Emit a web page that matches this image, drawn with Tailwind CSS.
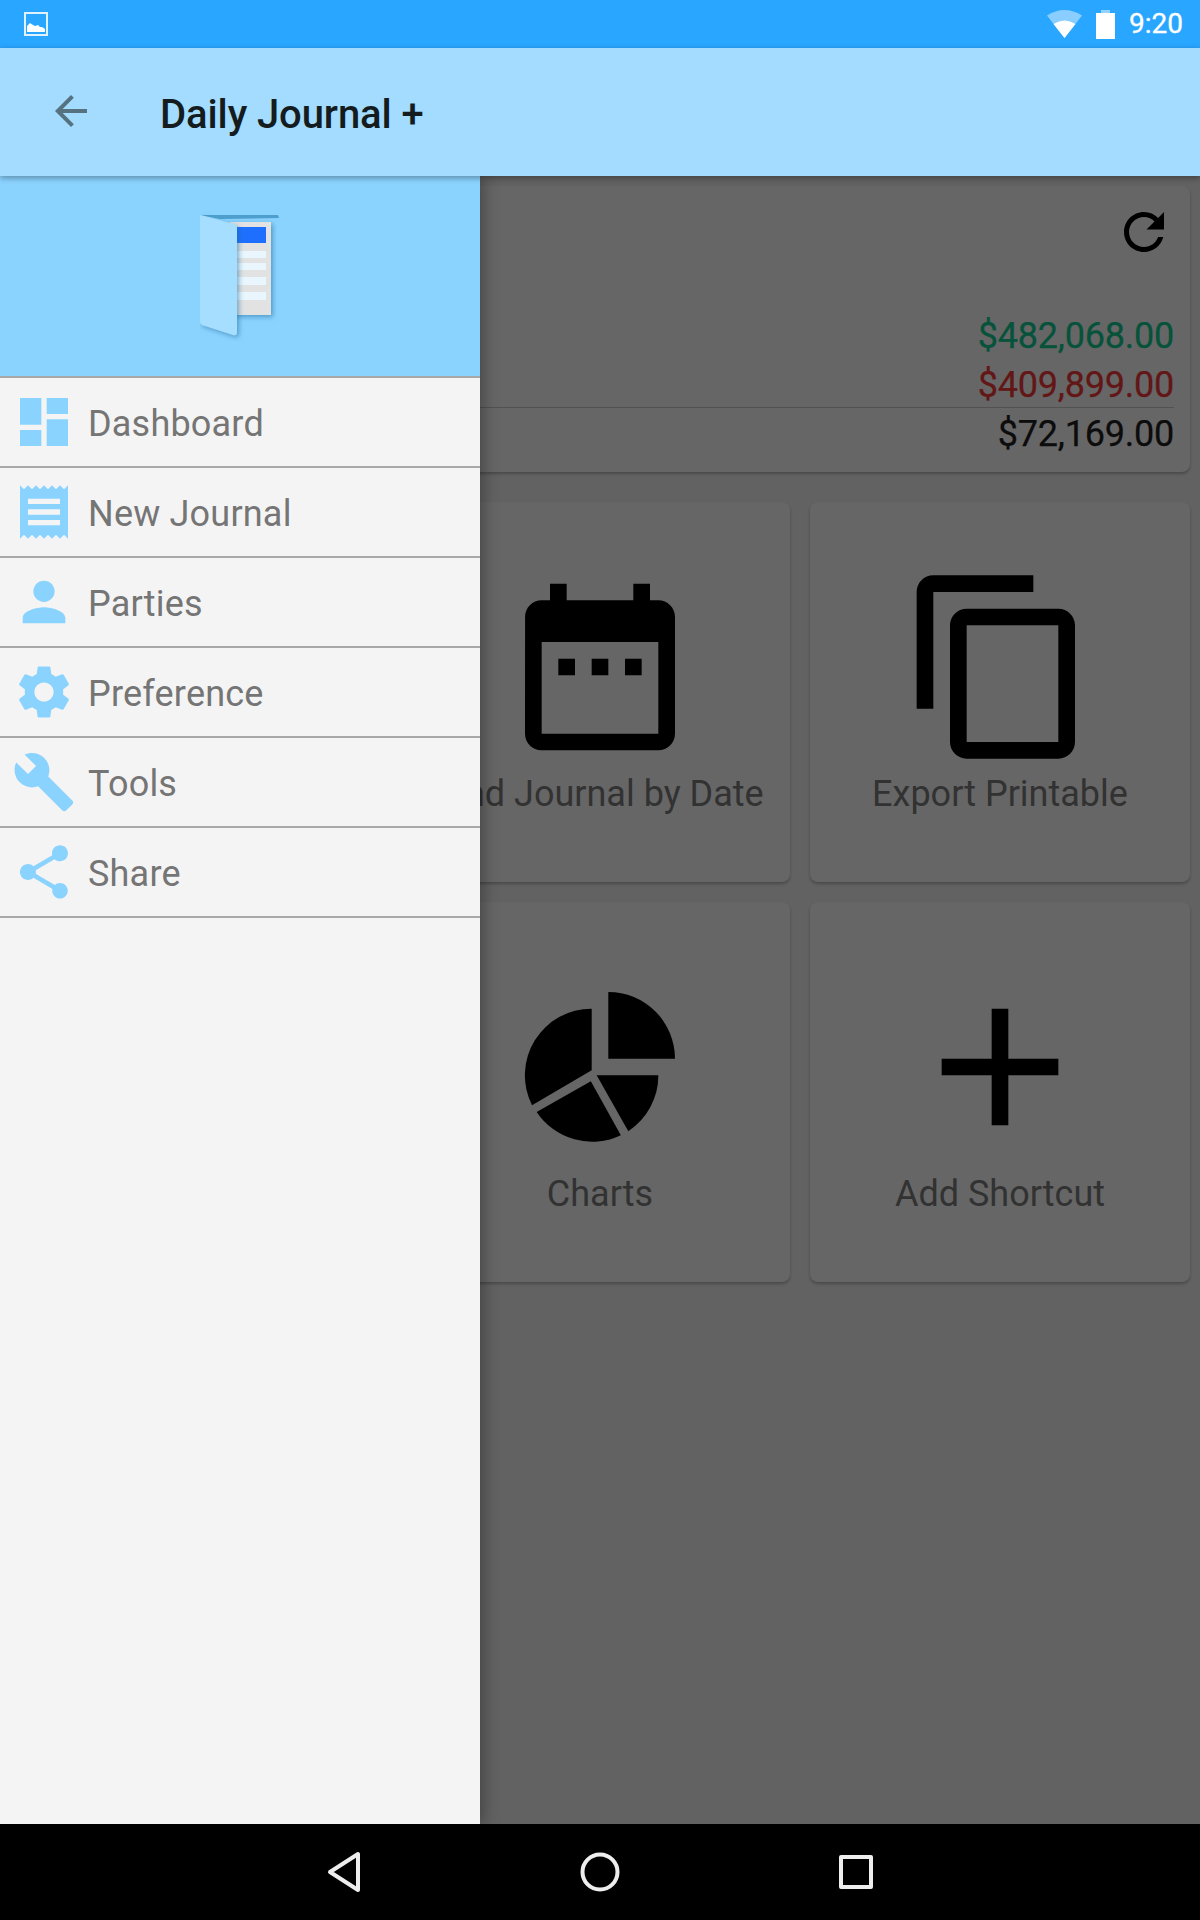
<!DOCTYPE html>
<html lang="en">
  <head>
    <meta charset="UTF-8" />
    <meta name="viewport" content="width=device-width, initial-scale=1.0" />
    <title>Daily Journal +</title>
    <script src="https://cdn.jsdelivr.net/npm/@tailwindcss/browser@4"></script>
  </head>
  <body class="font-['Roboto',sans-serif]">
    <div class="w-[1200px] h-[1920px] flex flex-col overflow-hidden bg-[#626262]">

      <!-- status bar -->
      <div class="h-12 shrink-0 bg-[#29a6ff] flex items-center pl-6 pr-[17px] text-white">
        <div class="w-6 h-6 border-2 border-white/85 flex items-end">
          <svg class="w-5 h-5" viewBox="0 0 20 20" fill="#fff"><path d="M1 18v-6l3-3 3 2 2 1 3-1 2 2 2 0 3 2v3z"/></svg>
        </div>
        <svg class="ml-auto w-[35px] h-7" viewBox="0 0 35 28">
          <path fill="#fff" fill-opacity=".45" d="M0 5.5Q17.5-5.5 35 5.5L17.5 28z"/>
          <path fill="#fff" d="M6.5 14Q17.5 7 28.5 14L17.5 28z"/>
        </svg>
        <svg class="ml-[14px] w-[19px] h-[29px]" viewBox="0 0 19 29">
          <path fill="#fff" fill-opacity=".5" d="M5 0h9v3H5z"/>
          <path fill="#fff" d="M0 3h19v26H0z"/>
        </svg>
        <span class="ml-[14px] text-[28px] leading-none [-webkit-text-stroke:0.3px_#fff]">9:20</span>
      </div>

      <!-- app bar -->
      <div class="relative z-20 h-32 shrink-0 bg-[#a3dcff] flex items-center pl-[47px] shadow-[0_2px_6px_rgba(0,0,0,0.35)]">
        <svg class="w-12 h-12 -mt-0.5" viewBox="0 0 24 24" fill="#56717f"><path d="M20 11H7.83l5.59-5.59L12 4l-8 8 8 8 1.41-1.41L7.83 13H20v-2z"/></svg>
        <h1 class="ml-[65px] mt-[6px] text-[40px] font-medium leading-none tracking-[-0.1px] text-[#141c20]">Daily Journal +</h1>
      </div>

      <!-- main -->
      <div class="relative flex-1 px-2.5 pt-2.5">
        <div class="h-[286px] rounded-lg bg-[#666666] shadow-[0_2px_3px_rgba(0,0,0,0.25)] flex flex-col items-end pt-4 pr-4">
          <svg class="w-[60px] h-[60px]" viewBox="0 0 24 24" fill="#000"><path d="M17.65 6.35C16.2 4.9 14.21 4 12 4c-4.42 0-7.99 3.58-7.99 8s3.57 8 7.99 8c3.73 0 6.84-2.55 7.73-6h-2.08c-.82 2.33-3.04 4-5.65 4-3.31 0-6-2.69-6-6s2.69-6 6-6c1.66 0 3.14.69 4.22 1.78L13 11h7V4l-2.35 2.35z"/></svg>
          <div class="mt-[49px] w-full text-right text-[36px] leading-[48px] tracking-[-0.22px] [-webkit-text-stroke:0.25px]">
            <div class="text-[#07523a] pt-px h-[49px]">$482,068.00</div>
            <div class="text-[#621616] border-b border-[#525252] pt-px h-[48px]">$409,899.00</div>
            <div class="text-[#0c0c0c] pt-[2px]">$72,169.00</div>
          </div>
        </div>

        <div class="mt-[30px] grid grid-cols-3 gap-5 auto-rows-[380px] text-[36px] leading-[48px] text-[#323232] text-center">
          <div class="rounded-lg bg-[#666666]"></div>
          <div class="rounded-lg bg-[#666666] shadow-[0_2px_3px_rgba(0,0,0,0.25)] pt-[65px] flex flex-col items-center">
            <svg class="w-[200px] h-[200px]" viewBox="0 0 24 24" fill="#000"><path d="M9 11H7v2h2v-2zm4 0h-2v2h2v-2zm4 0h-2v2h2v-2zm2-7h-1V2h-2v2H8V2H6v2H5c-1.11 0-1.99.9-1.99 2L3 20c0 1.1.89 2 2 2h14c1.1 0 2-.9 2-2V6c0-1.1-.9-2-2-2zm0 16H5V9h14v11z"/></svg>
            <span class="mt-[3px] whitespace-nowrap">Find Journal by Date</span>
          </div>
          <div class="rounded-lg bg-[#666666] shadow-[0_2px_3px_rgba(0,0,0,0.25)] pt-[65px] flex flex-col items-center">
            <svg class="w-[200px] h-[200px]" viewBox="0 0 24 24" fill="#000"><path d="M16 1H4c-1.1 0-2 .9-2 2v14h2V3h12V1zm3 4H8c-1.1 0-2 .9-2 2v14c0 1.1.9 2 2 2h11c1.1 0 2-.9 2-2V7c0-1.1-.9-2-2-2zm0 16H8V7h11v14z"/></svg>
            <span class="mt-[3px]">Export Printable</span>
          </div>
          <div class="rounded-lg bg-[#666666]"></div>
          <div class="rounded-lg bg-[#666666] shadow-[0_2px_3px_rgba(0,0,0,0.25)] pt-[65px] flex flex-col items-center">
            <svg class="w-[200px] h-[200px]" viewBox="0 0 24 24" fill="#000">
              <path d="M21 11h-8V3a8 8 0 0 1 8 8z"/>
              <path d="M11 5v7.4l-7.16 4.2A8 8 0 0 1 11 5z"/>
              <path d="M10.9 13.7l3.6 6.5A8 8 0 0 1 4.4 17.4z"/>
              <path d="M11.6 13H19a8 8 0 0 1-3.6 6.7z"/>
            </svg>
            <span class="mt-[3px]">Charts</span>
          </div>
          <div class="rounded-lg bg-[#666666] shadow-[0_2px_3px_rgba(0,0,0,0.25)] pt-[65px] flex flex-col items-center">
            <svg class="w-[200px] h-[200px]" viewBox="0 0 24 24" fill="#000"><path d="M19 13h-6v6h-2v-6H5v-2h6V5h2v6h6v2z"/></svg>
            <span class="mt-[3px]">Add Shortcut</span>
          </div>
        </div>

        <!-- drawer -->
        <div class="absolute z-10 left-0 top-0 bottom-0 w-[480px] bg-[#f4f4f4] shadow-[4px_0_14px_rgba(0,0,0,0.3)]">
          <div class="h-[202px] bg-[#8bd3ff] border-b-2 border-[#a8a8a8] flex items-center justify-center">
            <svg class="w-20 h-[130px] mt-0.5" viewBox="0 0 80 130">
              <defs>
                <filter id="soft" x="-30%" y="-30%" width="160%" height="160%"><feDropShadow dx="2" dy="2" stdDeviation="2.5" flood-color="#1f6d9e" flood-opacity=".55"/></filter>
              </defs>
              <path fill="#4f9fce" d="M0 3h78l1 3L20 7z"/>
              <path fill="#e2e2e2" filter="url(#soft)" d="M30 10h41v93H30z"/>
              <path fill="#1f6fff" d="M30 15h36v16H30z"/>
              <path fill="#eaf6fd" d="M30 39h36v7H30zM30 51h36v7H30zM30 65h36v8H30zM30 80h36v8H30z"/>
              <path fill="#a6deff" filter="url(#soft)" d="M0 3l34 9q3 1 3 4v104q0 4-4 3L2 113q-2-1-2-3z"/>
            </svg>
          </div>
          <ul class="text-[36px] leading-none text-[#757575] tracking-[0.2px]">
            <li class="h-[90px] border-b-2 border-[#a8a8a8] flex items-center pl-3">
              <svg class="w-16 h-16" viewBox="0 0 24 24" fill="#8bd3ff"><path d="M3 13h8V3H3v10zm0 8h8v-6H3v6zm10 0h8V11h-8v10zm0-18v6h8V3h-8z"/></svg>
              <span class="ml-3 mt-[4px]">Dashboard</span>
            </li>
            <li class="h-[90px] border-b-2 border-[#a8a8a8] flex items-center pl-3">
              <svg class="w-16 h-16" viewBox="0 0 24 24" fill="#8bd3ff"><path d="M18 17H6v-2h12v2zm0-4H6v-2h12v2zm0-4H6V7h12v2zM3 22l1.5-1.5L6 22l1.5-1.5L9 22l1.5-1.5L12 22l1.5-1.5L15 22l1.5-1.5L18 22l1.5-1.5L21 22V2l-1.5 1.5L18 2l-1.5 1.5L15 2l-1.5 1.5L12 2l-1.5 1.5L9 2 7.5 3.5 6 2 4.5 3.5 3 2v20z"/></svg>
              <span class="ml-3 mt-[4px]">New Journal</span>
            </li>
            <li class="h-[90px] border-b-2 border-[#a8a8a8] flex items-center pl-3">
              <svg class="w-16 h-16" viewBox="0 0 24 24" fill="#8bd3ff"><path d="M12 12c2.21 0 4-1.79 4-4s-1.79-4-4-4-4 1.79-4 4 1.79 4 4 4zm0 2c-2.67 0-8 1.34-8 4v2h16v-2c0-2.66-5.33-4-8-4z"/></svg>
              <span class="ml-3 mt-[4px]">Parties</span>
            </li>
            <li class="h-[90px] border-b-2 border-[#a8a8a8] flex items-center pl-3">
              <svg class="w-16 h-16" viewBox="0 0 24 24" fill="#8bd3ff"><path d="M19.14 12.94c.04-.3.06-.61.06-.94 0-.32-.02-.64-.07-.94l2.03-1.58c.18-.14.23-.41.12-.61l-1.92-3.32c-.12-.22-.37-.29-.59-.22l-2.39.96c-.5-.38-1.03-.7-1.62-.94l-.36-2.54c-.04-.24-.24-.41-.48-.41h-3.84c-.24 0-.43.17-.47.41l-.36 2.54c-.59.24-1.13.57-1.62.94l-2.39-.96c-.22-.08-.47 0-.59.22L2.74 8.87c-.12.21-.08.47.12.61l2.03 1.58c-.05.3-.09.63-.09.94s.02.64.07.94l-2.03 1.58c-.18.14-.23.41-.12.61l1.92 3.32c.12.22.37.29.59.22l2.39-.96c.5.38 1.03.7 1.62.94l.36 2.54c.05.24.24.41.48.41h3.84c.24 0 .44-.17.47-.41l.36-2.54c.59-.24 1.13-.56 1.62-.94l2.39.96c.22.08.47 0 .59-.22l1.92-3.32c.12-.22.07-.47-.12-.61l-2.01-1.58zM12 15.6c-1.98 0-3.6-1.62-3.6-3.6s1.62-3.6 3.6-3.6 3.6 1.62 3.6 3.6-1.62 3.6-3.6 3.6z"/></svg>
              <span class="ml-3 mt-[4px]">Preference</span>
            </li>
            <li class="h-[90px] border-b-2 border-[#a8a8a8] flex items-center pl-3">
              <svg class="w-16 h-16" viewBox="0 0 24 24" fill="#8bd3ff"><path d="M22.7 19l-9.1-9.1c.9-2.3.4-5-1.5-6.9-2-2-5-2.4-7.4-1.3L9 6 6 9 1.6 4.7C.4 7.1.9 10.1 2.9 12.1c1.9 1.9 4.6 2.4 6.9 1.5l9.1 9.1c.4.4 1 .4 1.4 0l2.3-2.3c.5-.4.5-1.1.1-1.4z"/></svg>
              <span class="ml-3 mt-[4px]">Tools</span>
            </li>
            <li class="h-[90px] border-b-2 border-[#a8a8a8] flex items-center pl-3">
              <svg class="w-16 h-16" viewBox="0 0 24 24" fill="#8bd3ff"><path d="M18 16.08c-.76 0-1.44.3-1.96.77L8.91 12.7c.05-.23.09-.46.09-.7s-.04-.47-.09-.7l7.05-4.11c.54.5 1.25.81 2.04.81 1.66 0 3-1.34 3-3s-1.34-3-3-3-3 1.34-3 3c0 .24.04.47.09.7L8.04 9.81C7.5 9.31 6.79 9 6 9c-1.66 0-3 1.34-3 3s1.34 3 3 3c.79 0 1.5-.31 2.04-.81l7.12 4.16c-.05.21-.08.43-.08.65 0 1.61 1.31 2.92 2.92 2.92 1.61 0 2.92-1.31 2.92-2.92s-1.31-2.92-2.92-2.92z"/></svg>
              <span class="ml-3 mt-[4px]">Share</span>
            </li>
          </ul>
        </div>
      </div>

      <!-- nav bar -->
      <div class="relative z-20 h-24 shrink-0 bg-black pl-[326px] flex items-center">
        <svg class="w-9 h-[42px] mt-[-1px]" viewBox="0 0 36 42" fill="none" stroke="#eeeeee" stroke-width="4" stroke-linejoin="round"><path d="M32 3v36L4 21z"/></svg>
        <svg class="ml-[217px] w-[42px] h-[42px]" viewBox="0 0 42 42" fill="none" stroke="#eeeeee" stroke-width="4"><circle cx="21" cy="21" r="17.5"/></svg>
        <svg class="ml-[217px] w-[36px] h-[36px] -mt-px" viewBox="0 0 36 36" fill="none" stroke="#eeeeee" stroke-width="4" stroke-linejoin="round"><path d="M3 3h30v30H3z"/></svg>
      </div>
    </div>
  </body>
</html>
